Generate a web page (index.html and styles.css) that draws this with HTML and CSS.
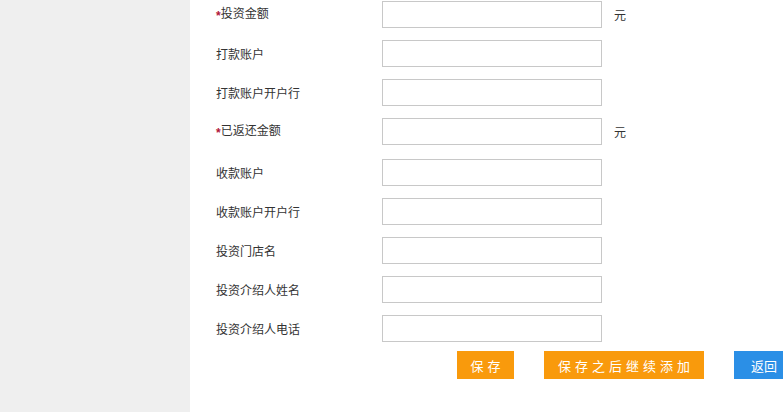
FILE: index.html
```html
<!DOCTYPE html>
<html>
<head>
    <title>投资信息</title>
    <link rel="stylesheet" href="styles.css">
</head>
<body>
    <div class="page">
        <div class="sidebar"></div>
        <div class="main">
            <form class="form">
                <div class="row">
                    <label class="label"><span class="req">*</span>投资金额</label>
                    <input class="field" type="text">
                    <span class="unit">元</span>
                </div>
                <div class="row">
                    <label class="label">打款账户</label>
                    <input class="field" type="text">
                </div>
                <div class="row">
                    <label class="label">打款账户开户行</label>
                    <input class="field" type="text">
                </div>
                <div class="row row-wide">
                    <label class="label"><span class="req">*</span>已返还金额</label>
                    <input class="field" type="text">
                    <span class="unit">元</span>
                </div>
                <div class="row">
                    <label class="label">收款账户</label>
                    <input class="field" type="text">
                </div>
                <div class="row">
                    <label class="label">收款账户开户行</label>
                    <input class="field" type="text">
                </div>
                <div class="row">
                    <label class="label">投资门店名</label>
                    <input class="field" type="text">
                </div>
                <div class="row">
                    <label class="label">投资介绍人姓名</label>
                    <input class="field" type="text">
                </div>
                <div class="row">
                    <label class="label">投资介绍人电话</label>
                    <input class="field" type="text">
                </div>
                <div class="actions">
                    <button type="button" class="btn btn-save">保存</button>
                    <button type="button" class="btn btn-continue">保存之后继续添加</button>
                    <button type="button" class="btn btn-back">返回</button>
                </div>
            </form>
        </div>
    </div>
</body>
</html>
```

FILE: styles.css
```css
body {
    margin: 0;
    padding: 0;
    font-family: "Noto Sans CJK SC", "Liberation Sans", sans-serif;
    font-size: 12px;
    color: #333;
    background: #fff;
}

.page {
    display: flex;
    min-height: 412px;
}

.sidebar {
    width: 190px;
    flex-shrink: 0;
    background-color: #efefef;
}

.main {
    flex: 1;
    padding: 1px 0 0 26px;
}

.row {
    display: flex;
    align-items: center;
    height: 27px;
    margin-bottom: 12px;
}

.row-wide {
    margin-bottom: 14px;
}

.label {
    width: 166px;
    flex-shrink: 0;
    line-height: 27px;
}

.req {
    color: #b0163a;
    font-family: "Liberation Sans", sans-serif;
    font-weight: bold;
    font-size: 12px;
    vertical-align: -2px;
}

.field {
    box-sizing: border-box;
    width: 220px;
    height: 27px;
    margin: 0;
    border: 1px solid #c8c8c8;
    padding: 0 6px;
    background: #fff;
}

.unit {
    margin-left: 12px;
}

.actions {
    display: flex;
    padding-left: 241px;
    margin-top: -3px;
}

.btn {
    height: 28px;
    border: none;
    padding: 0;
    color: #fff;
    font-family: "Noto Sans CJK SC", "Liberation Sans", sans-serif;
    font-size: 13px;
    letter-spacing: 4px;
    text-indent: 4px;
}

.btn-save {
    width: 57px;
    background-color: #f99a0c;
}

.btn-continue {
    width: 160px;
    margin-left: 30px;
    background-color: #f99a0c;
}

.btn-back {
    width: 60px;
    margin-left: 30px;
    background-color: #2b8fe6;
    letter-spacing: 0;
    text-indent: 0;
}
```
